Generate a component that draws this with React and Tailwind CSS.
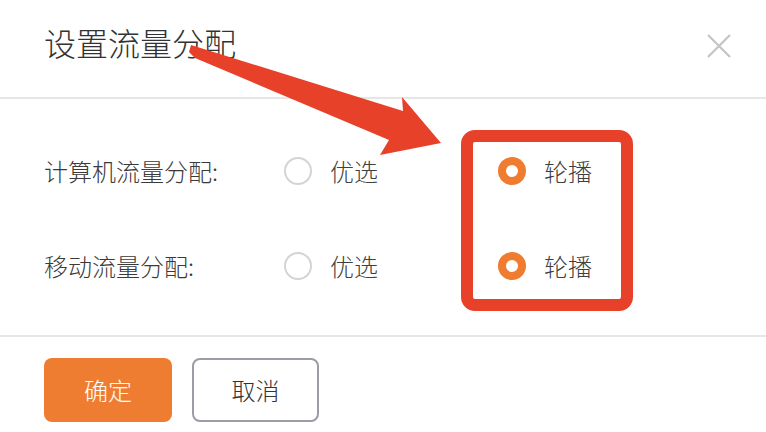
const rows = [
  { label: "计算机流量分配:", value: "roundrobin" },
  { label: "移动流量分配:", value: "roundrobin" },
];

function Radio({ checked, label }) {
  return (
    <div className="flex items-center gap-[18px]">
      {checked ? (
        <span className="flex size-[28px] items-center justify-center rounded-full bg-[#f07c30]">
          <span className="size-[12px] rounded-full bg-white" />
        </span>
      ) : (
        <span className="size-[28px] rounded-full border-2 border-[#d4d4d4] bg-white" />
      )}
      <span className="text-[24px] font-light leading-none text-[#404040]">{label}</span>
    </div>
  );
}

export default function App() {
  return (
    <div
      className="relative h-[432px] w-[766px] overflow-hidden bg-white text-[#333]"
      style={{ fontFamily: '"Noto Sans CJK SC", "Noto Sans", sans-serif' }}
    >
      {/* header */}
      <div className="flex h-[99px] items-center justify-between border-b-2 border-[#e6e6e6] pl-[44px] pr-[34px]">
        <h1 className="pb-[14px] text-[32px] font-light leading-none text-[#333]">
          设置流量分配
        </h1>
        <button className="mb-[6px] text-[#c4c4c4]">
          <svg width="26" height="26" viewBox="0 0 26 26" fill="none" stroke="currentColor" strokeWidth="2.2">
            <path d="M2 2 L24 24 M24 2 L2 24" />
          </svg>
        </button>
      </div>

      {/* body */}
      <div className="flex h-[238px] flex-col gap-[47px] border-b-2 border-[#e6e6e6] pl-[44px] pt-[48px]">
        {rows.map((row) => (
          <div key={row.label} className="flex h-[48px] items-center">
            <span className="w-[240px] text-[24px] font-light leading-none text-[#3a3a3a]">{row.label}</span>
            <div className="w-[214px]">
              <Radio checked={row.value === "preferred"} label="优选" />
            </div>
            <Radio checked={row.value === "roundrobin"} label="轮播" />
          </div>
        ))}
      </div>

      {/* footer */}
      <div className="flex gap-[20px] pl-[44px] pt-[21px]">
        <button className="h-[64px] w-[128px] rounded-[8px] bg-[#ef7d31] text-[24px] font-light text-white">
          确定
        </button>
        <button className="h-[64px] w-[127px] rounded-[8px] border-2 border-[#9c9ca4] bg-white text-[24px] font-light text-[#333]">
          取消
        </button>
      </div>

      {/* annotation overlay */}
      <div className="absolute left-[461px] top-[130px] h-[181px] w-[172px] rounded-[14px] border-[12px] border-[#e8412a]" />
      <svg className="pointer-events-none absolute left-0 top-0" width="766" height="432" viewBox="0 0 766 432">
        <polygon
          fill="#e8412a"
          points="191,45 403,111 402,97 441,143 380,155 389,140 195,58 189,52"
        />
      </svg>
    </div>
  );
}
